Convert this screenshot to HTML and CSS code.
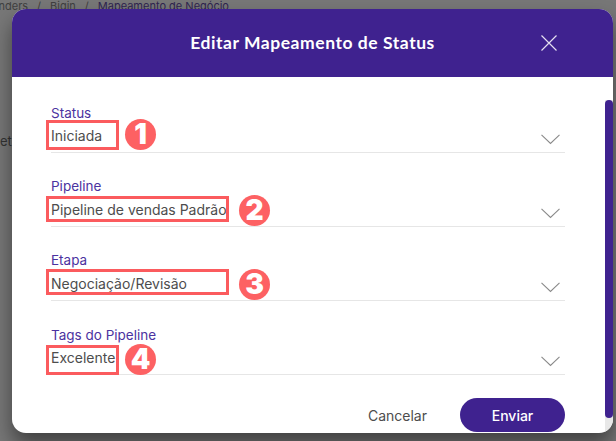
FILE: index.html
```html
<!DOCTYPE html>
<html lang="pt">
<head>
<meta charset="utf-8">
<title>Editar Mapeamento de Status</title>
<link rel="stylesheet" href="styles.css">
</head>
<body>
<div class="backdrop">
  <div class="crumbs"><span>nders</span><span>/</span><span>Bigin</span><span>/</span><span class="current">Mapeamento de Negócio</span></div>
  <div class="behind">et</div>
</div>
<section class="modal">
  <header class="modal-head">
    <h1>Editar Mapeamento de Status</h1>
    <svg class="close" width="16" height="16" viewBox="0 0 16 16"><path d="M.5.5l15 15M15.500.5l-15 15" fill="none" stroke="#e4dff0" stroke-width="1.200"/></svg>
  </header>
  <div class="modal-clip">
    <div class="modal-body">
      <div class="field">
        <label class="label-1">Status</label>
        <div class="select"><span>Iniciada</span><svg class="chev" width="19" height="11" viewBox="0 0 19 11"><path d="M.5.8l9 8.700 9-8.700" fill="none" stroke="#8a8a8a" stroke-width="1.100"/></svg></div>
        <i class="box box-1"></i><b class="badge badge-1">1</b>
      </div>
      <div class="field">
        <label>Pipeline</label>
        <div class="select"><span>Pipeline de vendas Padrão</span><svg class="chev" width="19" height="11" viewBox="0 0 19 11"><path d="M.5.8l9 8.700 9-8.700" fill="none" stroke="#8a8a8a" stroke-width="1.100"/></svg></div>
        <i class="box box-2"></i><b class="badge badge-2">2</b>
      </div>
      <div class="field">
        <label>Etapa</label>
        <div class="select"><span>Negociação/Revisão</span><svg class="chev" width="19" height="11" viewBox="0 0 19 11"><path d="M.5.8l9 8.700 9-8.700" fill="none" stroke="#8a8a8a" stroke-width="1.100"/></svg></div>
        <i class="box box-3"></i><b class="badge badge-3">3</b>
      </div>
      <div class="field">
        <label class="label-4">Tags do Pipeline</label>
        <div class="select"><span>Excelente</span><svg class="chev" width="19" height="11" viewBox="0 0 19 11"><path d="M.5.8l9 8.700 9-8.700" fill="none" stroke="#8a8a8a" stroke-width="1.100"/></svg></div>
        <i class="box box-4"></i><b class="badge badge-4">4</b>
      </div>
      <div class="actions">
        <button class="cancel">Cancelar</button>
        <button class="send">Enviar</button>
      </div>
    </div>
    <div class="scroll-track"><div class="scroll-thumb"></div></div>
  </div>
</section>
</body>
</html>
```
FILE: styles.css
```css
* { box-sizing: border-box; }
html, body { margin: 0; height: 100%; overflow: hidden; }
body {
  width: 616px; height: 441px; position: relative;
  background: #777;
  font-family: Inter, "Liberation Sans", sans-serif;
}
.backdrop { color: #4a4a4a; font-size: 11px; }
.crumbs { display: flex; gap: 9px; margin: -2px 0 0 -1.500px; height: 12px; line-height: 16px; color: #3f3f3f; }
.crumbs .current { color: #2f2450; }
.behind { margin-top: 123px; font-size: 13px; color: #333; line-height: 16px; }
.modal {
  position: absolute; left: 12px; top: 9px; width: 601px; height: 424px;
  background: #fff; border-radius: 14px;
  box-shadow: 0 12px 20px rgba(0, 0, 0, .45);
}
.modal-clip { position: absolute; inset: 0; border-radius: 14px; overflow: hidden; pointer-events: none; }
.modal-head {
  height: 68px; background: #3f228f; display: flex; align-items: center; justify-content: center;
  position: relative; border-radius: 14px 14px 0 0; z-index: 1;
}
.modal-head h1 { margin: 0; color: #fff; font: 700 17.500px/20px Lato, sans-serif; letter-spacing: .55px; }
.close { position: absolute; left: 529px; top: 26px; }
.modal-body { padding: 95px 48px 0 39px; pointer-events: auto; }
.field { position: relative; height: 74px; }
.field label { display: block; color: #4b32a0; font-size: 13.500px; line-height: 16px; }
.field .label-1 { position: relative; top: 1px; }
.field .label-4 { position: relative; top: 1px; }
.select {
  display: flex; justify-content: space-between; align-items: flex-end;
  height: 33px; padding-top: 8px; border-bottom: 1px solid #e6e6e6;
  color: #4d4d4d; font-size: 14px; line-height: 16px;
}
.select span { align-self: flex-start; }
.chev { margin: 0 5px 7px 0; }
.box { position: absolute; left: -5px; border: 3px solid #fb5b5e; pointer-events: none; }
.box-1 { width: 73px; top: 16px; height: 30px; }
.box-2 { width: 183px; top: 18px; height: 26px; }
.box-3 { width: 183px; top: 17px; height: 26px; }
.box-4 { width: 73px; top: 19px; height: 30px; }
.badge {
  position: absolute; width: 31px; height: 31px; border-radius: 50%;
  background: #fd6163; color: #fff; text-align: center;
  font: 900 28px/31px Inter, "Liberation Sans", sans-serif;
}
.badge-1 { left: 74px; top: 15px; }
.badge-2 { left: 188px; top: 17px; }
.badge-3 { left: 188px; top: 17px; }
.badge-4 { left: 74px; top: 18px; }
.actions { display: flex; justify-content: flex-end; align-items: center; gap: 33px; margin-top: -2px; }
.actions button { font-family: Inter, "Liberation Sans", sans-serif; font-size: 14px; border: 0; background: none; padding: 0; }
.cancel { color: #4d4d4d; }
.actions .send { width: 105px; height: 34px; border-radius: 17px; color: #fff; font-weight: 500; background: #3f228f; }
.scroll-track { position: absolute; right: 0; top: 91px; bottom: 0; width: 8px; background: #e8e8e8; }
.scroll-thumb { height: 318px; background: #3f228f; border-radius: 4px; }
```
